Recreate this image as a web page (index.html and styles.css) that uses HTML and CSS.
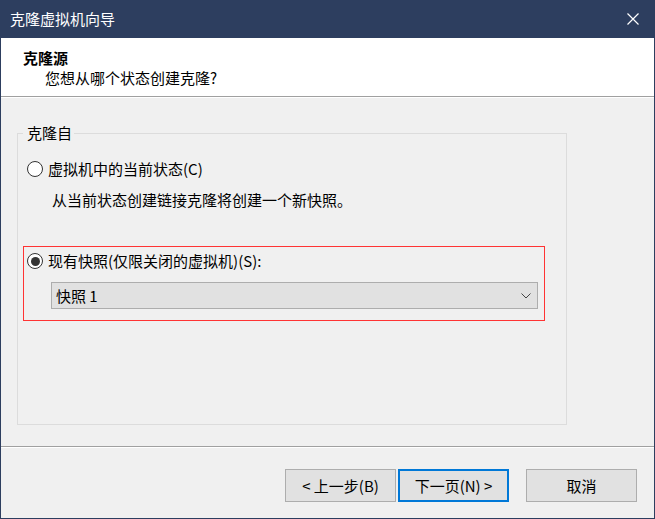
FILE: index.html
```html
<!DOCTYPE html>
<html lang="zh-CN">
<head>
<meta charset="utf-8">
<title>克隆虚拟机向导</title>
<link rel="stylesheet" href="styles.css">
</head>
<body>
<div class="window">
  <div class="titlebar">
    <span class="title">克隆虚拟机向导</span>
    <svg class="close" width="12" height="12" viewBox="0 0 12 12"><path d="M0.5 0.5 L11.5 11.5 M11.5 0.5 L0.5 11.5" stroke="#fff" stroke-width="1.2" fill="none"/></svg>
  </div>
  <div class="header">
    <div class="h-title">克隆源</div>
    <div class="h-sub">您想从哪个状态创建克隆?</div>
  </div>
  <div class="main">
    <fieldset class="group">
      <legend class="legend">克隆自</legend>
      <div class="option first">
        <span class="radio"></span>
        <span class="label">虚拟机中的当前状态(C)</span>
      </div>
      <div class="desc">从当前状态创建链接克隆将创建一个新快照。</div>
      <div class="highlight">
        <div class="option">
          <span class="radio checked"></span>
          <span class="label">现有快照(仅限关闭的虚拟机)(S):</span>
        </div>
        <div class="select">
          <span class="select-text">快照&nbsp;1</span>
          <svg class="chevron" width="10" height="6" viewBox="0 0 10 6"><path d="M0.5 0.5 L5 5 L9.5 0.5" stroke="#444" stroke-width="1" fill="none"/></svg>
        </div>
      </div>
    </fieldset>
  </div>
  <div class="footer">
    <button class="btn">&lt;&nbsp;上一步(B)</button>
    <button class="btn default">下一页(N)&nbsp;&gt;</button>
    <button class="btn cancel">取消</button>
  </div>
</div>
</body>
</html>
```
FILE: styles.css
```css
html, body {
  margin: 0;
  padding: 0;
}
body {
  font-family: "Noto Sans CJK SC", "Noto Sans", sans-serif;
  font-size: 15px;
  line-height: 20px;
  color: #000;
  background: #f0f0f0;
}
.window {
  width: 655px;
  height: 519px;
  box-sizing: border-box;
  background: #2d3e5f;
  padding: 0 1px 1px 1px;
  display: flex;
  flex-direction: column;
}
.titlebar {
  height: 38px;
  flex: none;
  display: flex;
  align-items: center;
  justify-content: space-between;
  padding: 0 15px 0 9px;
  color: #fff;
}
.close {
  display: block;
}
.header {
  flex: none;
  height: 58px;
  background: #fff;
  border-bottom: 1px solid #a0a0a0;
  padding: 0 0 0 22px;
  box-sizing: content-box;
}
.h-title {
  font-weight: bold;
  margin-top: 10px;
}
.h-sub {
  padding-left: 22px;
}
.main {
  flex: 1;
  background: #f0f0f0;
  border-top: 1px solid #fff;
  padding: 0 0 0 16px;
  min-height: 0;
}
.group {
  margin: 25px 0 0 0;
  width: 550px;
  height: 302px;
  box-sizing: border-box;
  border: 1px solid #dcdcdc;
  padding: 16px 0 0 5px;
  min-width: 0;
}
.legend {
  padding: 0 2px 0 4px;
  line-height: 20px;
}
.option {
  display: flex;
  align-items: center;
  height: 20px;
  margin-left: 4px;
}
.radio {
  width: 16px;
  height: 16px;
  box-sizing: border-box;
  border: 1px solid #333;
  border-radius: 50%;
  background: #fff;
  margin-right: 5px;
  flex: none;
  display: flex;
  align-items: center;
  justify-content: center;
}
.radio.checked::after {
  content: "";
  width: 9px;
  height: 9px;
  border-radius: 50%;
  background: #333;
}
.desc {
  margin: 11px 0 0 29px;
}
.highlight {
  margin-top: 36px;
  width: 522px;
  height: 75px;
  box-sizing: border-box;
  border: 1px solid #ff3333;
  padding: 4px 0 0 0;
}
.highlight .option {
  margin-left: 3px;
}
.select {
  margin: 11px 0 0 27px;
  width: 487px;
  height: 27px;
  box-sizing: border-box;
  border: 1px solid #adadad;
  background: #e1e1e1;
  display: flex;
  align-items: center;
  justify-content: space-between;
  padding: 0 6px 0 4px;
}
.chevron {
  display: block;
}
.footer {
  flex: none;
  height: 72px;
  box-sizing: border-box;
  background: #f0f0f0;
  border-top: 1px solid #a0a0a0;
  box-shadow: inset 0 1px 0 #fff;
  display: flex;
  justify-content: flex-end;
  align-items: flex-start;
  padding: 22px 17px 0 0;
}
.btn {
  width: 111px;
  height: 33px;
  box-sizing: border-box;
  border: 1px solid #adadad;
  background: #e1e1e1;
  font-family: "Noto Sans CJK SC", "Noto Sans", sans-serif;
  font-size: 15px;
  line-height: 20px;
  color: #000;
  padding: 0;
  margin: 0;
}
.btn.default {
  border: 2px solid #0078d7;
  margin-left: 2px;
}
.btn.cancel {
  margin-left: 17px;
}
```
